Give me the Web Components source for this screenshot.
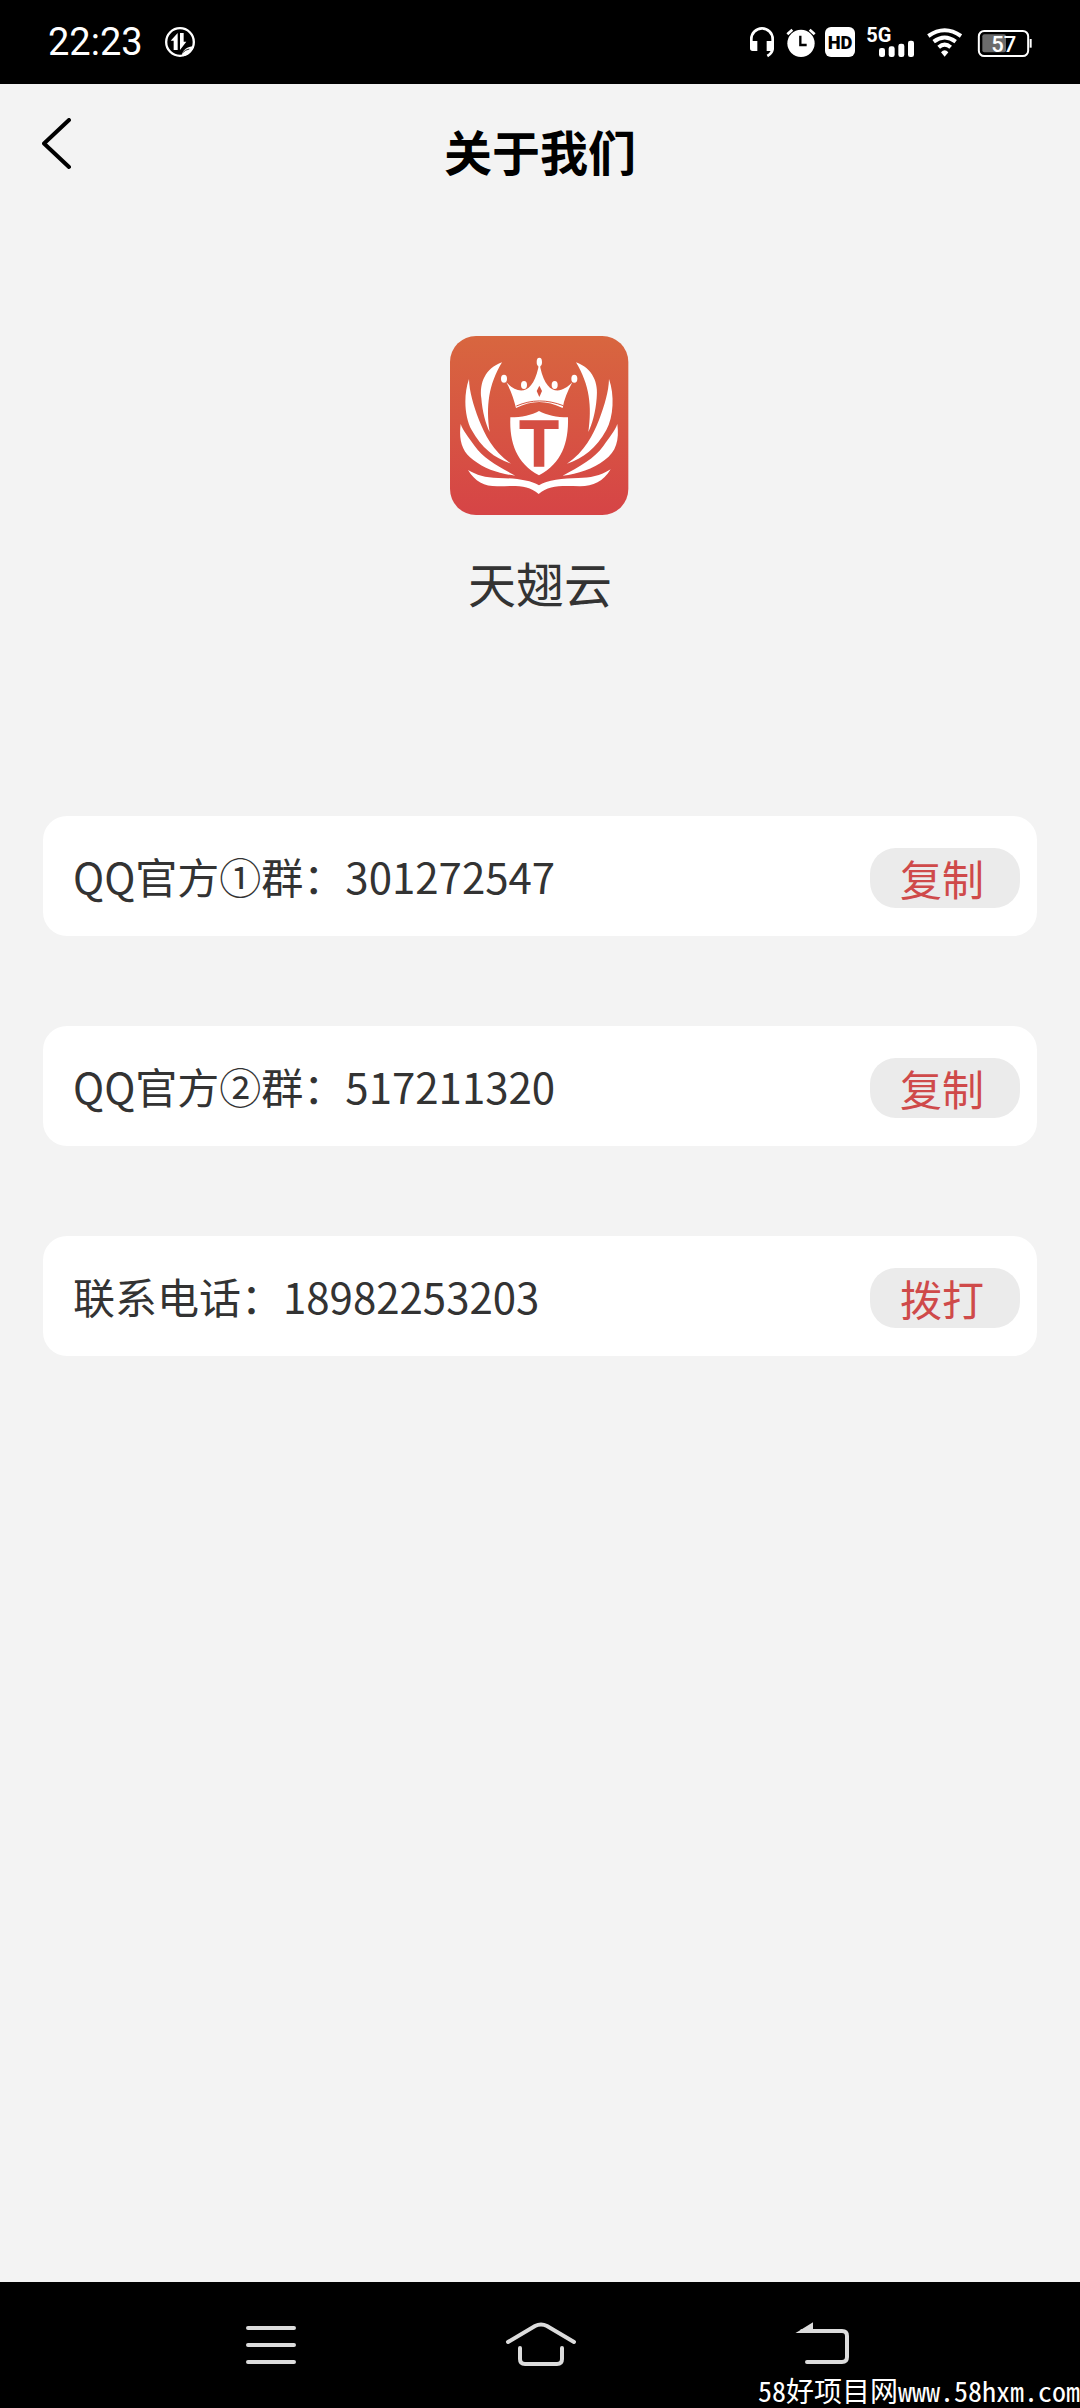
<!DOCTYPE html>
<html lang="zh-CN">
<head>
<meta charset="utf-8">
<meta name="viewport" content="width=device-width, initial-scale=1">
<title>关于我们</title>
<style>
  html, body { margin: 0; background: #f3f3f3; }
  body { font-family: "Noto Sans CJK SC", sans-serif; color: #333; }
</style>
</head>
<body>
<about-page></about-page>

<template id="t-about-page">
  <style>
    :host { display: flex; flex-direction: column; min-height: 100vh; }
    main { flex: 1; display: flex; flex-direction: column; gap: 198px; padding: 120px 43px; }
    .contacts { display: flex; flex-direction: column; gap: 90px; }
  </style>
  <status-bar>22:23</status-bar>
  <page-header>关于我们</page-header>
  <main>
    <app-brand>天翅云</app-brand>
    <section class="contacts">
      <contact-card>QQ官方①群：301272547<button slot="action" type="button">复制</button></contact-card>
      <contact-card>QQ官方②群：517211320<button slot="action" type="button">复制</button></contact-card>
      <contact-card>联系电话：18982253203<a slot="action" href="tel:18982253203">拨打</a></contact-card>
    </section>
  </main>
  <system-nav><site-mark slot="mark">58好项目网www.58hxm.com</site-mark></system-nav>
</template>

<template id="t-status-bar">
  <style>
    :host { display: flex; align-items: center; justify-content: space-between; height: 84px; padding: 0 48px; box-sizing: border-box; background: #000; color: #fff; }
    .side { display: flex; align-items: center; }
    .left { gap: 22px; }
    .right { gap: 9px; }
    time { font: 400 38px/44px Roboto, sans-serif; }
    svg { display: block; height: 30px; overflow: visible; }
    text { font-family: Roboto, sans-serif; }
  </style>
  <div class="side left">
    <time><slot></slot></time>
    <svg width="30" viewBox="0 0 90 90" fill="#fff">
      <circle cx="45" cy="45" r="41.500" fill="none" stroke="#fff" stroke-width="7"/>
      <path d="M38 18V69H26V41H17Z"/>
      <path d="M45 18H56V44H64L45 69Z"/>
      <path d="M51 82C54 69 66 59 86 58C82 73 70 86 54 88Z"/>
      <path d="M53 77Q61 68 73 66" fill="none" stroke="#000" stroke-width="2.500"/>
    </svg>
  </div>
  <div class="side right">
    <svg width="27" viewBox="0 0 81 90" fill="#fff">
      <path d="M4 58V36A32 32 0 0 1 68 36V62Q68 78 52 87" fill="none" stroke="#fff" stroke-width="8"/>
      <path d="M0 42H22V72H8Q0 72 0 64ZM50 42H72V66Q70 72 64 72H50Z"/>
    </svg>
    <svg width="30" viewBox="0 0 90 90" fill="#fff">
      <circle cx="45" cy="49" r="41"/>
      <path d="M4 22L19 8M71 8L86 22" stroke="#fff" stroke-width="8"/>
      <path d="M43 26V54H62" fill="none" stroke="#000" stroke-width="7"/>
    </svg>
    <svg width="33" viewBox="0 0 99 90">
      <rect width="90" height="90" rx="18" fill="#fff"/>
      <text x="45" y="65" text-anchor="middle" font-size="55" font-weight="900">HD</text>
    </svg>
    <svg width="51" viewBox="0 0 153 90" fill="#fff">
      <text x="-2" y="45" font-size="60" font-weight="700">5G</text>
      <rect x="36" y="63" width="18" height="27" rx="7"/>
      <rect x="65" y="58" width="18" height="32" rx="7"/>
      <rect x="94" y="50" width="18" height="40" rx="7"/>
      <rect x="123" y="41" width="18" height="49" rx="7"/>
    </svg>
    <svg width="42" viewBox="0 0 126 90" fill="none" stroke="#fff" stroke-width="12">
      <path d="M4 27Q53 -7 102 27M20 44Q53 19 86 44M35 61Q53 45 71 61"/>
      <path d="M42 76Q53 64 64 76L53 89Z" fill="#fff" stroke="none"/>
    </svg>
    <svg width="54" viewBox="0 0 162 90">
      <rect x="2.500" y="12" width="148" height="75" rx="16" fill="none" stroke="#fff" stroke-width="6"/>
      <rect x="13" y="22" width="71" height="54" rx="6" fill="#6b6b6b"/>
      <path d="M158 36V62" stroke="#fff" stroke-width="6"/>
      <text x="77" y="74" text-anchor="middle" font-size="66" font-weight="500" fill="#fff">57</text>
    </svg>
  </div>
</template>

<template id="t-page-header">
  <style>
    :host { display: grid; grid-template-columns: 1fr auto 1fr; align-items: center; height: 132px; padding: 0 42px; box-sizing: border-box; color: #000; }
    button { justify-self: start; display: block; border: 0; padding: 0; background: none; color: inherit; }
    svg { display: block; }
    h1 { margin: 0; font-size: 48px; line-height: 72px; font-weight: 700; }
  </style>
  <button type="button" aria-label="返回">
    <svg width="30" height="64" viewBox="0 0 30 64" fill="none" stroke="currentColor" stroke-width="4" stroke-linecap="round" stroke-linejoin="round"><path d="M27 2L2 25.500L27 49"/></svg>
  </button>
  <h1><slot></slot></h1>
</template>

<template id="t-app-brand">
  <style>
    :host { display: flex; flex-direction: column; align-items: center; gap: 30px; font-size: 48px; line-height: 72px; }
    svg { display: block; width: 180px; height: 180px; }
    text { font: 700 192px "Liberation Sans", sans-serif; }
  </style>
  <svg viewBox="60 48 540 540" aria-hidden="true">
    <defs>
      <linearGradient id="bg" x2="0" y2="1"><stop stop-color="#d8663f"/><stop offset="1" stop-color="#d64446"/></linearGradient>
      <g id="wing">
        <path d="M216 127C165 145 148 190 154 235C157 275 168 315 179 336C168 260 175 195 216 127Z"/>
        <path d="M117 177C100 225 103 290 125 330C155 385 195 415 243 431C190 395 165 345 147 300C130 255 118 215 117 177Z"/>
        <path d="M92 312C86 360 95 395 130 420C165 447 210 462 256 467C205 440 160 415 134 378C115 350 100 335 92 312Z"/>
      </g>
    </defs>
    <rect x="60" y="48" width="535" height="537" rx="78" fill="url(#bg)"/>
    <g fill="#fff">
      <use href="#wing"/>
      <use href="#wing" transform="translate(654 0) scale(-1 1)"/>
      <path d="M114 450C135 485 165 500 205 499C260 497 295 495 326 522C357 495 395 497 450 499C490 499 520 485 542 448C510 468 480 474 445 474C400 475 350 480 327 496C300 480 255 475 205 474C165 473 140 465 114 450Z"/>
      <ellipse cx="328" cy="126" rx="8" ry="13"/>
      <ellipse cx="222" cy="176" rx="9" ry="12"/>
      <ellipse cx="433" cy="176" rx="9" ry="12"/>
      <ellipse cx="282" cy="195" rx="9" ry="12"/>
      <ellipse cx="374" cy="195" rx="9" ry="12"/>
      <path d="M229 187C262 222 306 228 325 143V137H331V143C350 228 394 222 427 187C412 215 402 240 398 264C350 240 305 240 258 264C252 240 245 215 229 187Z"/>
      <path d="M241 292C275 292 305 285 327 273C350 285 380 292 414 292C416 370 395 430 327 466C260 430 238 370 241 292Z"/>
    </g>
    <g fill="#d5543f">
      <path d="M328 197L336 213L328 231L320 213Z"/>
      <path d="M259 258C305 238 350 238 400 257" fill="none" stroke="#d5543f" stroke-width="3"/>
      <text x="327" y="438" text-anchor="middle" fill="#d54e43" stroke="#d54e43" stroke-width="4">T</text>
    </g>
  </svg>
  <span><slot></slot></span>
</template>

<template id="t-contact-card">
  <style>
    :host { display: flex; align-items: center; justify-content: space-between; height: 120px; padding: 0 17px 0 30px; box-sizing: border-box; border-radius: 24px; background: #fff; font-size: 42px; line-height: 60px; }
    ::slotted([slot="action"]) {
      display: block; box-sizing: border-box; width: 150px; height: 60px; margin: 4px 0 0; padding: 0 30px; border: 0; border-radius: 26px;
      background: #ebebeb; color: #cf4a4a; font: inherit; text-align: left; text-decoration: none; white-space: nowrap;
    }
  </style>
  <span><slot></slot></span>
  <slot name="action"></slot>
</template>

<template id="t-system-nav">
  <style>
    :host { position: relative; display: block; background: #000; color: #dcdcdc; }
    nav { display: grid; grid-template-columns: repeat(3, 1fr); align-items: center; height: 126px; padding: 0 12.5%; }
    button { display: block; justify-self: center; border: 0; padding: 0; background: none; color: inherit; }
    svg { display: block; width: 80px; height: 48px; fill: none; stroke: currentColor; stroke-width: 4; stroke-linecap: round; }
    ::slotted([slot="mark"]) { position: absolute; right: 0; bottom: 4px; }
  </style>
  <nav>
    <button type="button" aria-label="最近任务"><svg viewBox="0 0 80 48"><path d="M18 7H64M18 24H64M18 41H64"/></svg></button>
    <button type="button" aria-label="主页"><svg viewBox="0 0 80 48"><path d="M8 21L35 5Q41 2 47 5L74 21M20 27V38Q20 43 25 43H57Q62 43 62 38V27"/></svg></button>
    <button type="button" aria-label="返回"><svg viewBox="0 0 80 48"><path d="M37 41H72Q77 41 77 36V15Q77 10 72 10H32"/><path d="M29 11L42 3V11Z" fill="currentColor" stroke-width="2"/></svg></button>
  </nav>
  <slot name="mark"></slot>
</template>

<template id="t-site-mark">
  <style>
    :host { display: block; color: #fff; font-size: 28px; line-height: 28px; font-feature-settings: "hwid"; white-space: nowrap; }
  </style>
  <slot></slot>
</template>

<script>
  const define = (name) => customElements.define(name, class extends HTMLElement {
    constructor() {
      super();
      this.attachShadow({ mode: "open" })
        .append(document.getElementById("t-" + name).content.cloneNode(true));
    }
  });
  ["status-bar", "page-header", "app-brand", "contact-card", "site-mark", "system-nav", "about-page"].forEach(define);
</script>
</body>
</html>
